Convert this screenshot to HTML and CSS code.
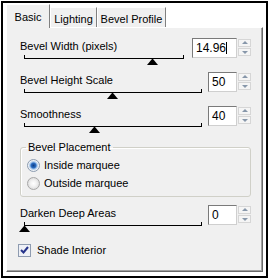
FILE: index.html
```html
<!DOCTYPE html>
<html lang="en">
<head>
    <meta charset="UTF-8">
    <title>Inner Bevel</title>
    <link rel="stylesheet" href="styles.css">
</head>
<body>
    <div class="frame">
        <div class="tabs">
            <div class="tab active">Basic</div>
            <div class="tab">Lighting</div>
            <div class="tab wide">Bevel Profile</div>
        </div>

        <div class="panel">
            <div class="row">
                <div class="slider">
                    <div class="label">Bevel Width (pixels)</div>
                    <div class="track short"><span class="thumb" style="left: 81%"></span></div>
                </div>
                <div class="num">
                    <div class="field wide">14.96<span class="caret"></span></div>
                    <div class="spin"><span class="up"></span><span class="down"></span></div>
                </div>
            </div>

            <div class="row">
                <div class="slider">
                    <div class="label">Bevel Height Scale</div>
                    <div class="track"><span class="thumb" style="left: 50%"></span></div>
                </div>
                <div class="num">
                    <div class="field">50</div>
                    <div class="spin"><span class="up"></span><span class="down"></span></div>
                </div>
            </div>

            <div class="row">
                <div class="slider">
                    <div class="label">Smoothness</div>
                    <div class="track"><span class="thumb" style="left: 40%"></span></div>
                </div>
                <div class="num">
                    <div class="field">40</div>
                    <div class="spin"><span class="up"></span><span class="down"></span></div>
                </div>
            </div>

            <fieldset class="group">
                <legend>Bevel Placement</legend>
                <label class="option"><input type="radio" name="place" checked> Inside marquee</label>
                <label class="option"><input type="radio" name="place"> Outside marquee</label>
            </fieldset>

            <div class="row after-group">
                <div class="slider">
                    <div class="label">Darken Deep Areas</div>
                    <div class="track"><span class="thumb" style="left: 0%"></span></div>
                </div>
                <div class="num">
                    <div class="field">0</div>
                    <div class="spin"><span class="up"></span><span class="down"></span></div>
                </div>
            </div>

            <label class="check">
                <span class="box">
                    <svg width="11" height="11" viewBox="0 0 11 11"><path d="M2 5 L4.5 7.5 L9 2" fill="none" stroke="#25338a" stroke-width="2"/></svg>
                </span>
                Shade Interior
            </label>
        </div>
    </div>
</body>
</html>
```

FILE: styles.css
```css
body {
    margin: 0;
    background: #fff;
    font-family: "Liberation Sans", Arial, sans-serif;
    font-size: 11px;
    color: #000;
}

.frame {
    box-sizing: border-box;
    width: 267px;
    height: 277px;
    margin: 1px 0 0 1px;
    border: 2px solid #000;
    padding: 1px 3px 0 3px;
    background: #fff;
}

.tabs {
    display: flex;
    align-items: flex-end;
    height: 23px;
}

.tab {
    box-sizing: border-box;
    width: 47px;
    height: 20px;
    padding-top: 5px;
    line-height: 13px;
    text-align: center;
    background: #f0f0f0;
    border: 1px solid #fff;
    border-right-color: #808080;
    border-bottom: none;
}

.tab.wide {
    width: 69px;
}

.tab.active {
    position: relative;
    z-index: 1;
    width: 44px;
    height: 24px;
    margin-bottom: -1px;
    padding-top: 6px;
}

.panel {
    box-sizing: border-box;
    height: 245px;
    background: #f0f0f0;
    border: 1px solid;
    border-color: #fff #696969 #696969 #fff;
    box-shadow: inset -1px -1px 0 #a0a0a0;
    padding: 12px 11px 0 13px;
}

.row {
    display: flex;
    justify-content: space-between;
    align-items: flex-start;
}

.row + .row {
    margin-top: 15px;
}

.row.after-group {
    margin-top: 10px;
}

.label {
    height: 13px;
    line-height: 13px;
}

.track {
    position: relative;
    box-sizing: border-box;
    width: 178px;
    height: 4px;
    margin: 2px 0 0 4px;
    border: 1px solid #000;
    border-top: none;
}

.track.short {
    width: 160px;
}

.thumb {
    position: absolute;
    top: 4px;
    width: 1px;
    height: 0;
    margin-left: -6px;
    border-left: 5px solid transparent;
    border-right: 5px solid transparent;
    border-bottom: 6px solid #000;
}

.num {
    display: flex;
    align-items: flex-start;
    gap: 1px;
    margin-top: -2px;
}

.field {
    box-sizing: border-box;
    width: 29px;
    height: 20px;
    padding-left: 3px;
    font-size: 12px;
    line-height: 18px;
    background: #fff;
    border: 1px solid;
    border-color: #7a7a7a #cfcfcf #cfcfcf #7a7a7a;
}

.field.wide {
    width: 45px;
}

.caret {
    display: inline-block;
    width: 0;
    height: 12px;
    border-right: 1px solid #000;
    vertical-align: -2px;
}

.spin {
    display: flex;
    flex-direction: column;
    gap: 1px;
    width: 13px;
    margin-top: 1px;
}

.spin span {
    position: relative;
    box-sizing: border-box;
    height: 8px;
    background: #f5f5f5;
    border: 1px solid #d6d6d6;
}

.spin span::after {
    content: "";
    position: absolute;
    left: 3px;
    width: 0;
    height: 0;
    border-left: 3px solid transparent;
    border-right: 3px solid transparent;
}

.spin .up::after {
    top: 1px;
    border-bottom: 3px solid #8797aa;
}

.spin .down::after {
    top: 2px;
    border-top: 3px solid #8797aa;
}

.group {
    box-sizing: border-box;
    width: 231px;
    margin: 14px 0 0 0;
    padding: 0 0 4px 5px;
    border: 1px solid #d0d0c8;
    border-radius: 3px;
    box-shadow: inset 1px 1px 0 #fff;
}

.group legend {
    padding: 0 2px;
    line-height: 13px;
}

.option {
    display: flex;
    align-items: center;
    gap: 4px;
    height: 18px;
}

.option:first-of-type {
    margin-top: 2px;
}

.option input {
    appearance: none;
    width: 13px;
    height: 13px;
    margin: 0 0 0 1px;
    border: 1px solid #a7a7a7;
    border-radius: 50%;
    background: radial-gradient(circle, #fff 0, #f2f2f2 3px, #dcdcdc 6px);
}

.option input:checked {
    border-color: #8c9cb0;
    background: radial-gradient(circle, #0f3f86 0, #2c6fc4 2.5px, #9cc0e8 3.5px, #eef2f6 5px);
}

.check {
    display: flex;
    align-items: center;
    gap: 6px;
    margin: 18px 0 0 -2px;
    line-height: 13px;
}

.check .box {
    box-sizing: border-box;
    display: flex;
    align-items: center;
    justify-content: center;
    width: 13px;
    height: 13px;
    background: #eef0f6;
    border: 1px solid #8e9bb0;
}
```
